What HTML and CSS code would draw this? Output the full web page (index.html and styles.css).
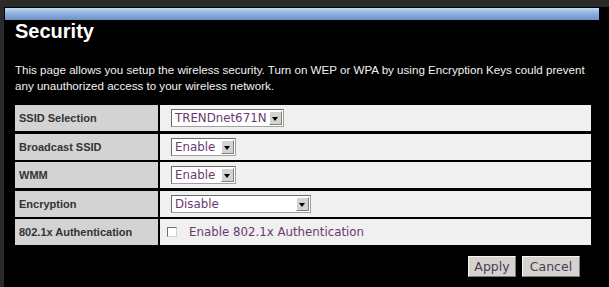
FILE: index.html
```html
<!DOCTYPE html>
<html>

<head>
    <title>Security</title>
    <link rel="stylesheet" href="styles.css">
</head>

<body>
    <div class="panel">
        <div class="topbar"></div>
        <div class="content">
            <h1>Security</h1>
            <p class="intro">This page allows you setup the wireless security. Turn on WEP or WPA by using Encryption Keys could prevent any unauthorized access to your wireless network.</p>

            <div class="form">
                <div class="label">SSID Selection</div>
                <div class="value">
                    <span class="select ssid"><span class="text">TRENDnet671N</span><span class="arrow"></span></span>
                </div>

                <div class="label">Broadcast SSID</div>
                <div class="value">
                    <span class="select small"><span class="text">Enable</span><span class="arrow"></span></span>
                </div>

                <div class="label">WMM</div>
                <div class="value">
                    <span class="select small"><span class="text">Enable</span><span class="arrow"></span></span>
                </div>

                <div class="label">Encryption</div>
                <div class="value">
                    <span class="select wide"><span class="text">Disable</span><span class="arrow"></span></span>
                </div>

                <div class="label">802.1x Authentication</div>
                <div class="value">
                    <label class="check"><span class="box"></span>Enable 802.1x Authentication</label>
                </div>
            </div>

            <div class="buttons">
                <button class="btn apply">Apply</button>
                <button class="btn cancel">Cancel</button>
            </div>
        </div>
    </div>
</body>
</html>
```

FILE: styles.css
```css
html {
    height: 100%;
    background-color: #2a2a2a;
}

body {
    margin: 0;
    height: 100%;
    font-family: 'Liberation Sans', Arial, sans-serif;
}

.panel {
    margin: 7px 0 0 4px;
    height: calc(100% - 7px);
    background-color: #000;
    padding-top: 1px;
    box-sizing: border-box;
}

.topbar {
    margin-left: 1px;
    width: 594px;
    height: 12px;
    background: linear-gradient(#c2d8f2, #8fb1df 45%, #6f90c2);
}

.content {
    padding: 0 18px 0 11px;
}

h1 {
    margin: 1px 0 0 0;
    font-size: 20px;
    line-height: 20px;
    font-weight: bold;
    color: #fff;
}

.intro {
    margin: 21px 0 0 0;
    max-width: 572px;
    font-size: 11.6px;
    line-height: 16px;
    color: #f2f2f2;
}

.form {
    margin-top: 11px;
    display: grid;
    grid-template-columns: 143px 1fr;
    grid-auto-rows: 26px;
    column-gap: 2px;
    row-gap: 2.5px;
}

.label {
    background-color: #d3d3d3;
    color: #333;
    font-size: 11px;
    font-weight: bold;
    padding-left: 4px;
    display: flex;
    align-items: center;
}

.value {
    background-color: #f0f0f0;
    padding-left: 11px;
    display: flex;
    align-items: center;
}

.select {
    display: inline-flex;
    align-items: stretch;
    height: 18px;
    box-sizing: border-box;
    background-color: #fff;
    border: 1px solid #a0a0a0;
    border-top-color: #6a6a6a;
    border-left-color: #6a6a6a;
    font-family: 'DejaVu Sans', Tahoma, sans-serif;
    font-size: 11.8px;
    color: #6a3a6e;
}

.select .text {
    flex: 1;
    padding-left: 3px;
    line-height: 16px;
    white-space: nowrap;
}

.select .arrow {
    width: 11px;
    margin: 1px;
    background-color: #d6d3ce;
    border: 1px solid #fff;
    border-right-color: #808080;
    border-bottom-color: #808080;
    position: relative;
}

.select .arrow::after {
    content: "";
    position: absolute;
    left: 2px;
    top: 5px;
    border-left: 3.5px solid transparent;
    border-right: 3.5px solid transparent;
    border-top: 4px solid #000;
}

.ssid {
    width: 113px;
}

.small {
    width: 65px;
}

.wide {
    width: 140px;
}

.check {
    display: flex;
    align-items: center;
    font-family: 'DejaVu Sans', Tahoma, sans-serif;
    font-size: 11.8px;
    color: #6a3a6e;
    margin-left: -4px;
}

.check .box {
    width: 10px;
    height: 10px;
    box-sizing: border-box;
    background-color: #fff;
    border: 1px solid #707070;
    border-right-color: #d0d0d0;
    border-bottom-color: #d0d0d0;
    margin-right: 12px;
}

.buttons {
    margin-top: 11px;
    display: flex;
    justify-content: flex-end;
    gap: 6px;
    padding-right: 11px;
}

.btn {
    height: 21px;
    padding: 0;
    background-color: #d6d3ce;
    border: 1px solid #f4f4f4;
    border-right-color: #7a7a7a;
    border-bottom-color: #7a7a7a;
    font-family: 'DejaVu Sans', Tahoma, sans-serif;
    font-size: 12.5px;
    color: #4a3a5a;
}

.apply {
    width: 48px;
}

.cancel {
    width: 58px;
}
```
